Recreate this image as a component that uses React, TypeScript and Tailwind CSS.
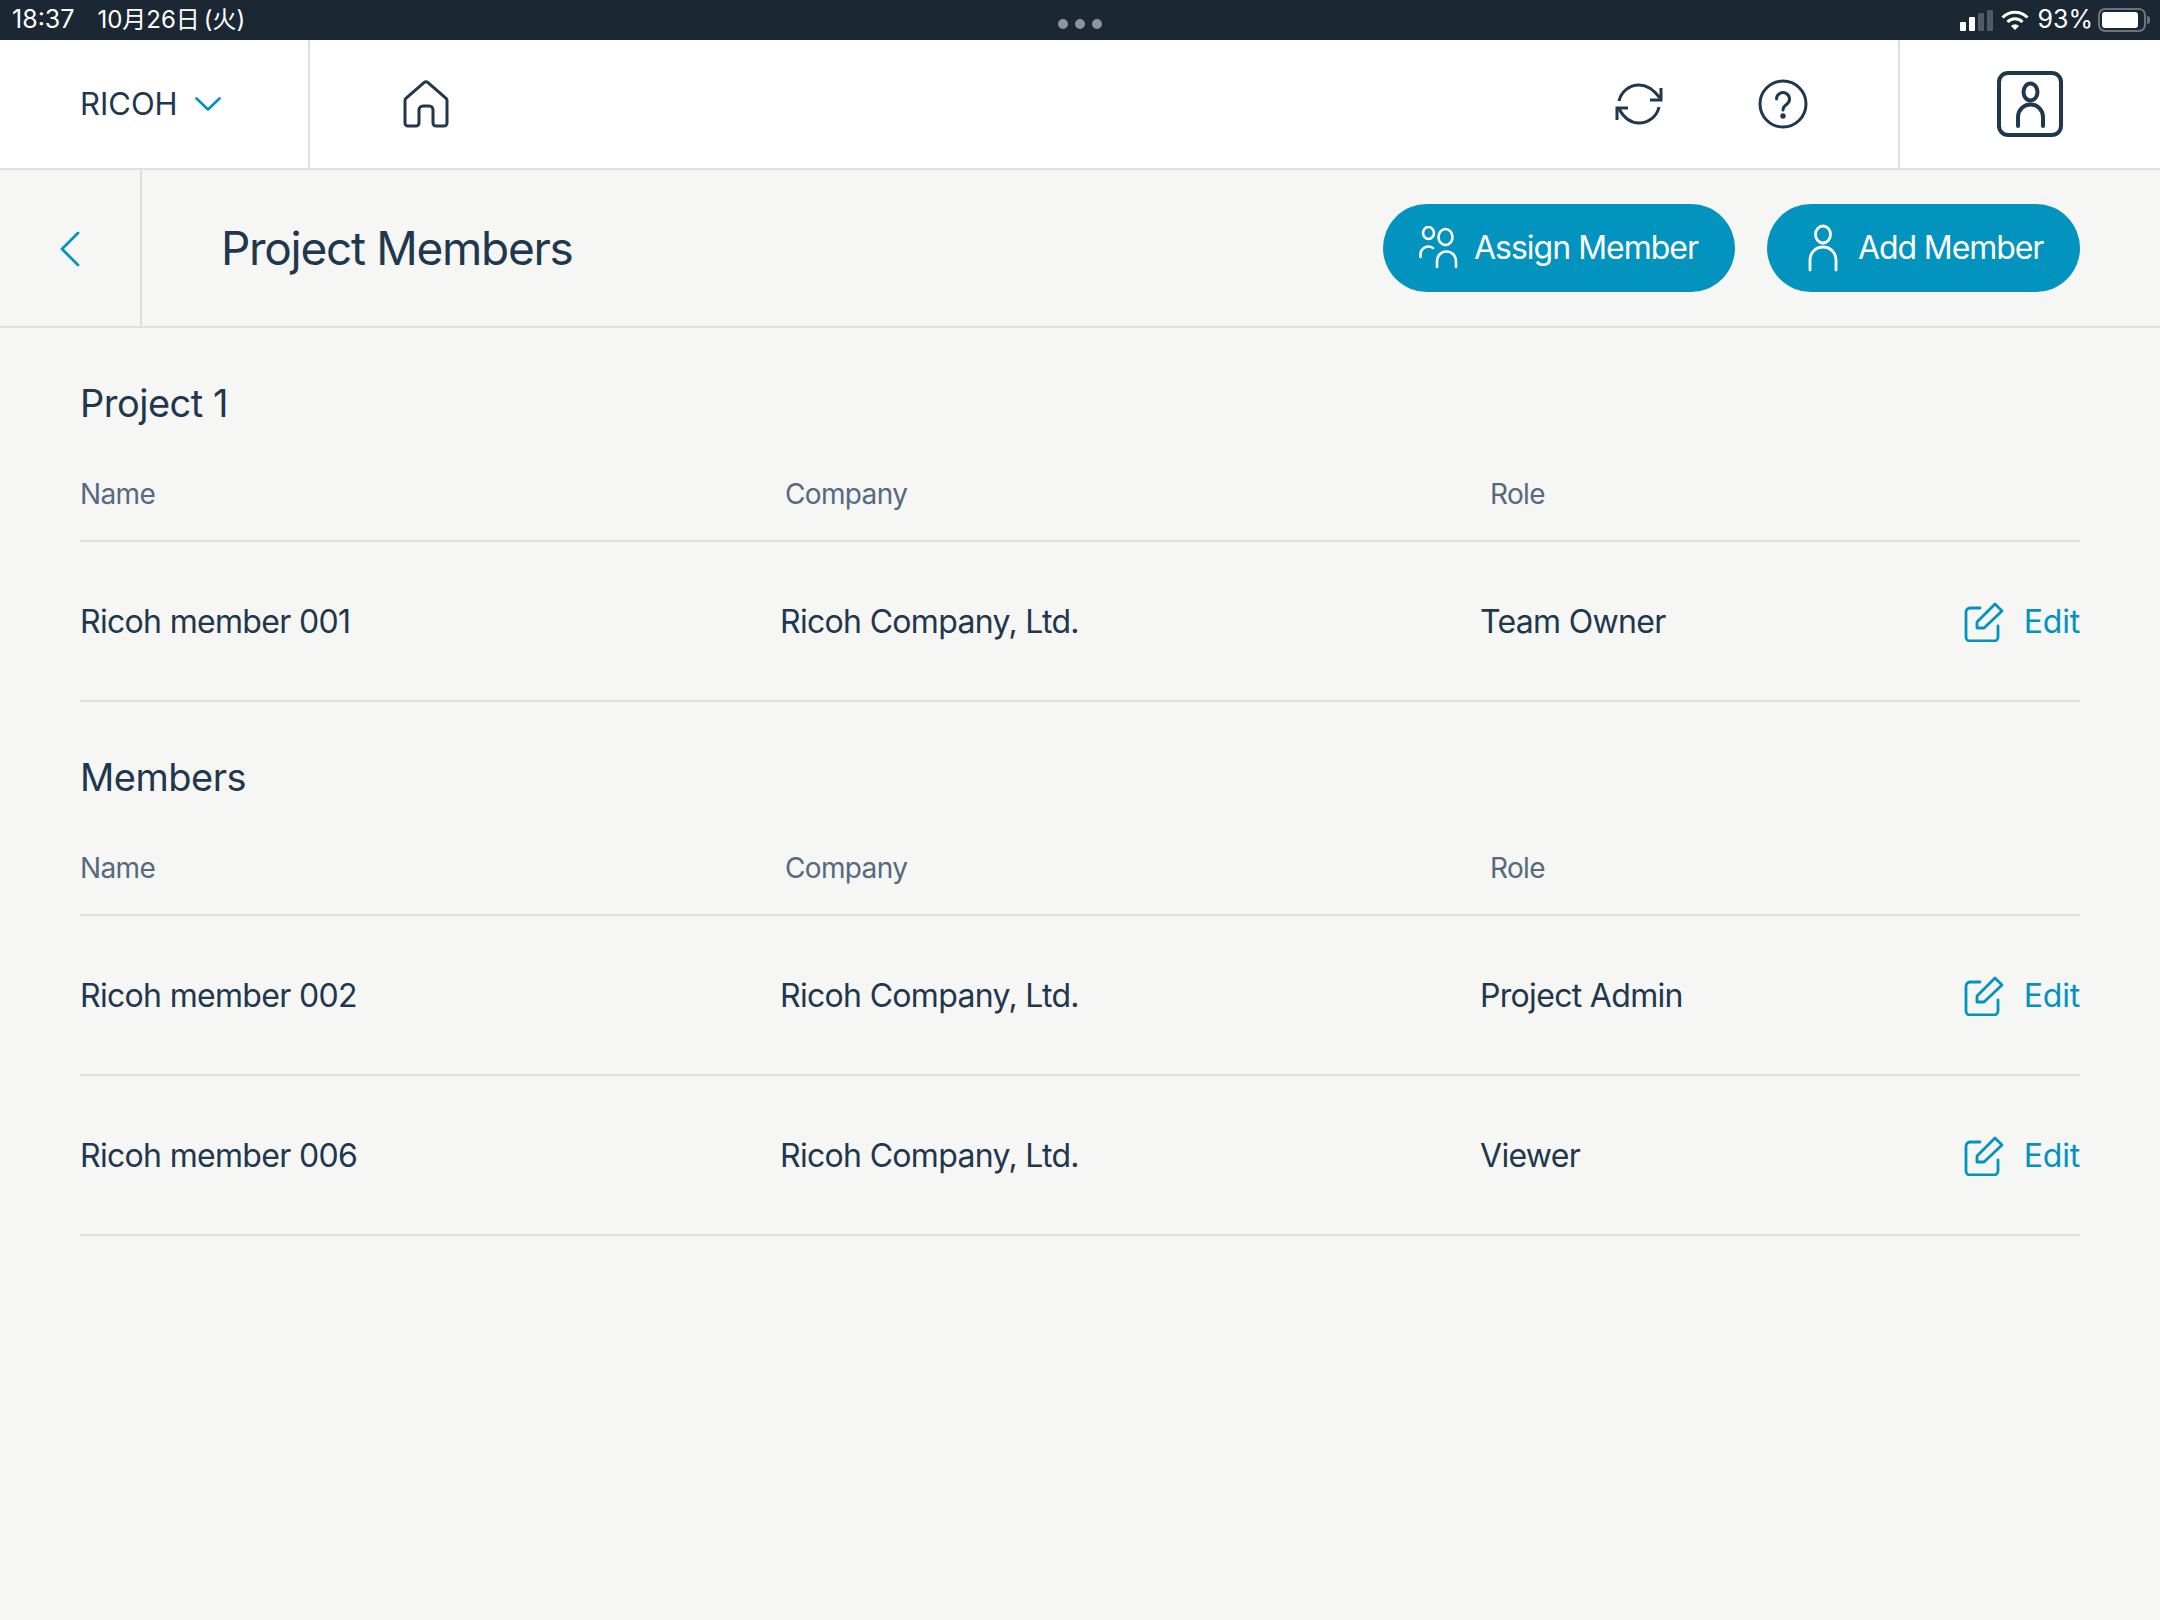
const INK = "#21374d";

function Chevron() {
  return (
    <svg width="26" height="14" viewBox="0 0 26 14" fill="none" stroke="#0294be" strokeWidth="2.6" strokeLinecap="round" strokeLinejoin="round">
      <path d="M1.5 1.5 13 12.5 24.5 1.5" />
    </svg>
  );
}

function HomeIcon() {
  return (
    <svg width="46" height="48" viewBox="0 0 46 48" fill="none" stroke={INK} strokeWidth="3" strokeLinejoin="round">
      <path d="M2 20.5a3 3 0 0 1 .9-2.1L21 2.6a3 3 0 0 1 4 0l18.100 15.800a3 3 0 0 1 .9 2.100V43a3 3 0 0 1-3 3h-8a3 3 0 0 1-3-3V30a4 4 0 0 0-4-4h-6a4 4 0 0 0-4 4v13a3 3 0 0 1-3 3H5a3 3 0 0 1-3-3Z" />
    </svg>
  );
}

function SyncIcon() {
  return (
    <svg width="50" height="42" viewBox="0 0 50 42" fill="none" stroke={INK} strokeWidth="3">
      <path d="M5 18C7 9 15 2 25 2c9 0 15 5 21 13" />
      <path d="M47 5v12H36" />
      <path d="M45 24c-2 9-10 16-20 16-9 0-15-5-20-14" />
      <path d="M3 37V25h11" />
    </svg>
  );
}

function HelpIcon() {
  return (
    <svg width="50" height="50" viewBox="0 0 50 50" fill="none" stroke={INK} strokeWidth="3" strokeLinecap="round">
      <circle cx="25" cy="25" r="23" />
      <path d="M18.500 20a6.500 6.500 0 1 1 10 5.500c-2.500 1.700-3.500 2.800-3.500 5.500" />
      <circle cx="25" cy="37" r="1.2" fill={INK} />
    </svg>
  );
}

function UserBoxIcon() {
  return (
    <svg width="66" height="66" viewBox="0 0 66 66" fill="none" stroke={INK} strokeWidth="4" strokeLinecap="round">
      <rect x="2" y="2" width="62" height="62" rx="9" />
      <ellipse cx="33.500" cy="21" rx="7" ry="8.500" />
      <path d="M21 55V46a12.500 12.500 0 0 1 25 0v9" />
    </svg>
  );
}

function PersonIcon() {
  return (
    <svg width="30" height="48" viewBox="0 0 30 48" fill="none" stroke="white" strokeWidth="2.800" strokeLinecap="round">
      <ellipse cx="15" cy="10.500" rx="7.500" ry="8.500" />
      <path d="M2 46V36a13 13 0 0 1 26 0v10" />
    </svg>
  );
}

function PeopleIcon() {
  return (
    <svg width="42" height="44" viewBox="0 0 42 44" fill="none" stroke="white" strokeWidth="2.600" strokeLinecap="round">
      <ellipse cx="10.500" cy="7" rx="5.500" ry="6" />
      <ellipse cx="27.500" cy="11" rx="7" ry="8" />
      <path d="M2.500 31v-2a8 8 0 0 1 12.500-7" />
      <path d="M19 41v-6a9.500 9.500 0 0 1 19 0v6" />
    </svg>
  );
}

function EditIcon() {
  return (
    <svg width="40" height="40" viewBox="0 0 40 40" fill="none" stroke="#0294be" strokeWidth="2.800" strokeLinecap="round" strokeLinejoin="round">
      <path d="M16 6H6a4 4 0 0 0-4 4v25a4 4 0 0 0 4 4h24a4 4 0 0 0 4-4V24" />
      <path d="M13 26v-6L31 2l7 7-18 17Z" />
    </svg>
  );
}

function StatusBar() {
  return (
    <div className="flex h-10 items-center justify-between bg-[#1b2733] pl-3 pr-[10px] text-[25px] text-white">
      <div className="flex-1 whitespace-pre">18:37<span className="ml-[23px] text-[24px]">10月26日</span><span className="ml-[4px] text-[24px]">(火)</span></div>
      <div className="flex gap-[7px] pt-[8px] pr-[2px]">
        <span className="h-[10px] w-[10px] rounded-full bg-[#8d949b]" />
        <span className="h-[10px] w-[10px] rounded-full bg-[#8d949b]" />
        <span className="h-[10px] w-[10px] rounded-full bg-[#8d949b]" />
      </div>
      <div className="flex flex-1 items-center justify-end">
        <div className="flex items-end gap-[3px]">
          <span className="h-[9px] w-[6px] rounded-[1px] bg-white" />
          <span className="h-[14px] w-[6px] rounded-[1px] bg-white" />
          <span className="h-[18px] w-[6px] rounded-[1px] bg-[#4f5a65]" />
          <span className="h-[21px] w-[6px] rounded-[1px] bg-[#4f5a65]" />
        </div>
        <svg className="ml-2" width="28" height="20" viewBox="0 0 28 20" fill="none" stroke="white" strokeWidth="3">
          <path d="M1.500 7.500a17.500 17.500 0 0 1 25 0" />
          <path d="M6.500 12a10.500 10.500 0 0 1 15 0" />
          <path d="M14 20l-4-4a5.500 5.500 0 0 1 8 0Z" fill="white" stroke="none" />
        </svg>
        <span className="ml-[9px]">93%</span>
        <div className="ml-[5px] flex h-6 w-[48px] items-center rounded-[7px] border-2 border-[#6b747d] p-[2px]">
          <div className="h-full w-[90%] rounded-[3px] bg-white" />
        </div>
        <span className="ml-[1px] h-2 w-[3px] rounded-r-sm bg-[#6b747d]" />
      </div>
    </div>
  );
}

function TopNav() {
  return (
    <div className="flex h-[130px] border-b-2 border-[#dde0e2] bg-white">
      <div className="flex w-[310px] items-center gap-[17px] border-r-2 border-[#dde0e2] pl-20 text-[31px] text-[#21374d]">
        RICOH
        <Chevron />
      </div>
      <div className="flex flex-1 items-center pl-[93px]">
        <HomeIcon />
      </div>
      <div className="flex items-center gap-[94px] pr-[90px]">
        <SyncIcon />
        <HelpIcon />
      </div>
      <div className="flex w-[262px] items-center border-l-2 border-[#dde0e2] pl-[97px]">
        <UserBoxIcon />
      </div>
    </div>
  );
}

function PageHeader() {
  return (
    <div className="flex h-[158px] border-b-2 border-[#dde0e2]">
      <div className="flex w-[142px] items-center border-r-2 border-[#dde0e2] pl-[60px] pt-[2px]">
        <svg width="20" height="36" viewBox="0 0 20 36" fill="none" stroke="#0294be" strokeWidth="2.800" strokeLinecap="round" strokeLinejoin="round">
          <path d="M18 2 2 18l16 16" />
        </svg>
      </div>
      <div className="flex flex-1 items-center justify-between pl-[79px] pr-20">
        <h1 className="text-[46px] tracking-[-1.3px] text-[#21374d]">Project Members</h1>
        <div className="flex gap-8">
          <button className="flex h-[88px] w-[352px] items-center gap-[14px] rounded-full bg-[#0294be] pl-[35px] text-[32px] tracking-[-1px] text-white">
            <PeopleIcon />
            Assign Member
          </button>
          <button className="flex h-[88px] w-[313px] items-center gap-[20px] rounded-full bg-[#0294be] pl-[41px] text-[32px] tracking-[-1.1px] text-white">
            <PersonIcon />
            Add Member
          </button>
        </div>
      </div>
    </div>
  );
}

function MemberTable({ title, rows, className }: { title: string; rows: string[][]; className: string }) {
  return (
    <section className={className}>
      <h2 className="mb-[1px] text-[38px] leading-[55px] tracking-[-0.5px] text-[#21374d]">{title}</h2>
      <div className="grid grid-cols-[705px_705px_1fr] border-b-2 border-[#dde0e2] pb-[26px] pt-[42px] text-[28px] leading-[40px] tracking-[-0.65px] text-[#556a80]">
        <div>Name</div>
        <div>Company</div>
        <div>Role</div>
      </div>
      {rows.map((row) => (
        <div key={row[0]} className="grid h-[160px] grid-cols-[700px_700px_1fr_auto] items-center border-b-2 border-[#dde0e2] pt-[1px] text-[32px] tracking-[-0.68px] text-[#21374d]">
          <div>{row[0]}</div>
          <div>{row[1]}</div>
          <div>{row[2]}</div>
          <button className="flex items-center gap-[20px] tracking-[-0.2px] text-[#0294be]">
            <EditIcon />
            Edit
          </button>
        </div>
      ))}
    </section>
  );
}

export default function App() {
  return (
    <div className="min-h-[1620px] bg-[#f6f6f4] font-['Inter','Noto_Sans_CJK_JP',sans-serif]">
      <StatusBar />
      <TopNav />
      <PageHeader />
      <main className="px-20">
        <MemberTable
          className="pt-[48px]"
          title="Project 1"
          rows={[["Ricoh member 001", "Ricoh Company, Ltd.", "Team Owner"]]}
        />
        <MemberTable
          className="pt-[48px]"
          title="Members"
          rows={[
            ["Ricoh member 002", "Ricoh Company, Ltd.", "Project Admin"],
            ["Ricoh member 006", "Ricoh Company, Ltd.", "Viewer"],
          ]}
        />
      </main>
    </div>
  );
}
